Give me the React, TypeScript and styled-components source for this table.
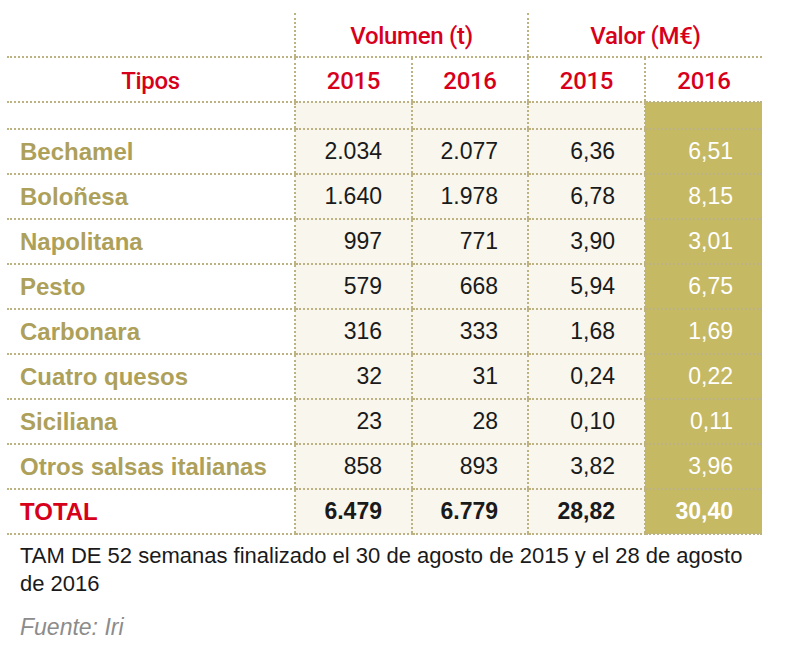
import styled, { createGlobalStyle } from "styled-components";

const rows = [
  { tipo: "Bechamel", v15: "2.034", v16: "2.077", e15: "6,36", e16: "6,51" },
  { tipo: "Boloñesa", v15: "1.640", v16: "1.978", e15: "6,78", e16: "8,15" },
  { tipo: "Napolitana", v15: "997", v16: "771", e15: "3,90", e16: "3,01" },
  { tipo: "Pesto", v15: "579", v16: "668", e15: "5,94", e16: "6,75" },
  { tipo: "Carbonara", v15: "316", v16: "333", e15: "1,68", e16: "1,69" },
  { tipo: "Cuatro quesos", v15: "32", v16: "31", e15: "0,24", e16: "0,22" },
  { tipo: "Siciliana", v15: "23", v16: "28", e15: "0,10", e16: "0,11" },
  { tipo: "Otros salsas italianas", v15: "858", v16: "893", e15: "3,82", e16: "3,96" },
];

export default function App() {
  return (
    <>
      <GlobalStyle />
      <Page>
        <Table>
          <colgroup>
            <col style={{ width: 288 }} />
            <col style={{ width: 117 }} />
            <col style={{ width: 116 }} />
            <col style={{ width: 117 }} />
            <col style={{ width: 117 }} />
          </colgroup>
          <thead>
            <tr>
              <HeadCell />
              <HeadCell colSpan={2} $divider>
                Volumen (t)
              </HeadCell>
              <HeadCell colSpan={2} $divider>
                Valor (M€)
              </HeadCell>
            </tr>
            <tr>
              <HeadCell>Tipos</HeadCell>
              <HeadCell $divider>2015</HeadCell>
              <HeadCell $divider>2016</HeadCell>
              <HeadCell $divider>2015</HeadCell>
              <HeadCell $divider>2016</HeadCell>
            </tr>
          </thead>
          <tbody>
            <tr>
              <LabelCell $spacer />
              <NumCell $spacer />
              <NumCell $spacer />
              <NumCell $spacer />
              <NumCell $spacer $olive />
            </tr>
            {rows.map((r) => (
              <tr key={r.tipo}>
                <LabelCell>{r.tipo}</LabelCell>
                <NumCell>{r.v15}</NumCell>
                <NumCell>{r.v16}</NumCell>
                <NumCell>{r.e15}</NumCell>
                <NumCell $olive>{r.e16}</NumCell>
              </tr>
            ))}
            <tr>
              <LabelCell $total>TOTAL</LabelCell>
              <NumCell $bold>6.479</NumCell>
              <NumCell $bold>6.779</NumCell>
              <NumCell $bold>28,82</NumCell>
              <NumCell $bold $olive>
                30,40
              </NumCell>
            </tr>
          </tbody>
        </Table>
        <Note>
          TAM DE 52 semanas finalizado el 30 de agosto de 2015 y el 28 de agosto
          de 2016
        </Note>
        <Source>Fuente: Iri</Source>
      </Page>
    </>
  );
}

const GlobalStyle = createGlobalStyle`
  body {
    margin: 0;
    background: #fff;
  }
`;

const Page = styled.div`
  padding: 13px 7px 0;
  font-family: "Liberation Sans", Arial, sans-serif;
`;

const Table = styled.table`
  width: 755px;
  table-layout: fixed;
  border-collapse: collapse;
`;

const line = "2px dotted #bdb382";

const HeadCell = styled.th<{ $divider?: boolean }>`
  padding: 3px 0 0;
  height: 40px;
  text-align: center;
  font-family: Roboto, "Liberation Sans", sans-serif;
  font-size: 24px;
  font-weight: 500;
  letter-spacing: -0.3px;
  color: #d7001b;
  border-bottom: ${line};
  border-left: ${(p) => (p.$divider ? line : "none")};
`;

const LabelCell = styled.td<{ $total?: boolean; $spacer?: boolean }>`
  padding: 0 0 0 13px;
  height: ${(p) => (p.$spacer ? 25 : 43)}px;
  font-size: 24px;
  font-weight: 700;
  white-space: nowrap;
  color: ${(p) => (p.$total ? "#d7001b" : "#ada05a")};
  border-bottom: ${line};
`;

const NumCell = styled.td<{ $olive?: boolean; $bold?: boolean; $spacer?: boolean }>`
  padding: 0 29px 0 0;
  height: ${(p) => (p.$spacer ? 25 : 43)}px;
  text-align: right;
  font-size: 23px;
  font-weight: ${(p) => (p.$bold ? 700 : 400)};
  color: ${(p) => (p.$olive ? "#fff" : "#1a1a1a")};
  background: ${(p) => (p.$olive ? "#c5b964" : "#f8f6ed")};
  border-bottom: ${line};
  border-left: ${line};
`;

const Note = styled.p`
  margin: 7px 0 0 13px;
  width: 740px;
  font-size: 22px;
  line-height: 28px;
  color: #1a1a1a;
`;

const Source = styled.p`
  margin: 15px 0 0 13px;
  font-size: 23px;
  line-height: 28px;
  font-style: italic;
  color: #8c8c8c;
`;
